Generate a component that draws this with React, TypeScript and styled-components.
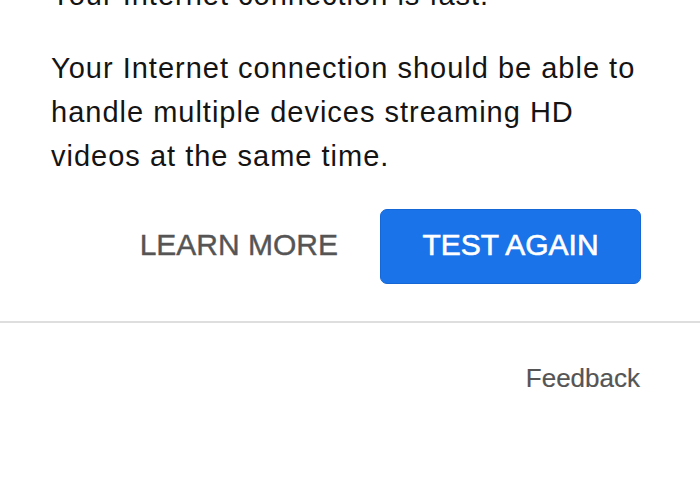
import React from "react";
import styled, { createGlobalStyle } from "styled-components";

const Global = createGlobalStyle`
  html, body { margin: 0; padding: 0; background: #ffffff; }
  body { font-family: "Liberation Sans", Arial, Helvetica, sans-serif; overflow: hidden; }
  * { box-sizing: border-box; }
`;

const Page = styled.div`
  width: 700px;
  height: 500px;
  overflow: hidden;
  background: #fff;
`;

const Card = styled.section`
  display: flex;
  flex-direction: column;
  margin-top: -27px;
`;

const Body = styled.div`
  padding: 0 56px 0 51px;
  display: flex;
  flex-direction: column;
  gap: 29px;
`;

const Text = styled.p`
  margin: 0;
  font-size: 29px;
  line-height: 44px;
  letter-spacing: 1px;
  color: #141414;
`;

const Actions = styled.div`
  display: flex;
  justify-content: flex-end;
  align-items: center;
  gap: 42px;
  padding: 31px 59px 37px 51px;
`;

const TextButton = styled.button`
  border: none;
  background: none;
  padding: 0 0 4px;
  font-family: inherit;
  font-size: 30px;
  color: #555555;
  -webkit-text-stroke: 0.4px #555555;
  cursor: pointer;
`;

const PrimaryButton = styled.button`
  width: 261px;
  height: 75px;
  padding: 0 0 4px;
  border: 1px solid #1667d6;
  border-radius: 7px;
  background: #1a73e8;
  color: #ffffff;
  font-family: inherit;
  font-size: 30px;
  -webkit-text-stroke: 0.6px #ffffff;
  cursor: pointer;
`;

const Divider = styled.hr`
  margin: 0;
  border: none;
  border-top: 2px solid #dedede;
`;

const Footer = styled.div`
  display: flex;
  justify-content: flex-end;
  padding: 40px 60px 0 51px;
`;

const FeedbackLink = styled.a`
  font-size: 26px;
  line-height: 30px;
  color: #555555;
  -webkit-text-stroke: 0.2px #555555;
  text-decoration: none;
`;

export default function App() {
  return (
    <Page>
      <Global />
      <Card>
        <Body>
          <Text>Your Internet connection is fast.</Text>
          <Text>
            Your Internet connection should be able to handle multiple devices
            streaming HD videos at the same time.
          </Text>
        </Body>
        <Actions>
          <TextButton>LEARN MORE</TextButton>
          <PrimaryButton>TEST AGAIN</PrimaryButton>
        </Actions>
        <Divider />
        <Footer>
          <FeedbackLink href="#">Feedback</FeedbackLink>
        </Footer>
      </Card>
    </Page>
  );
}
